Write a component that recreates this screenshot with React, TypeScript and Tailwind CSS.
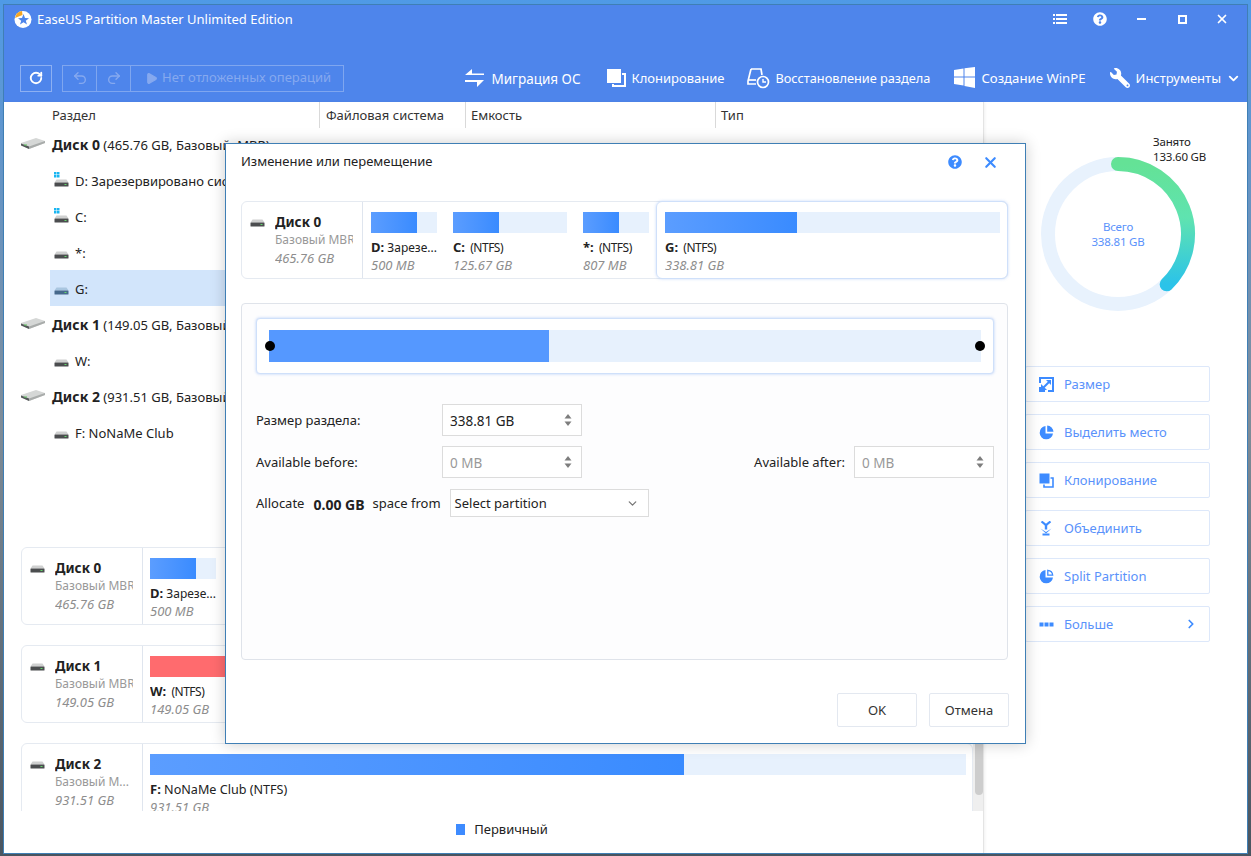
import React from "react";
import { ChevronDown, ChevronRight, RotateCw, Undo2, Redo2, Play, X } from "lucide-react";
import { FaQuestionCircle, FaWrench } from "react-icons/fa";

const font = { fontFamily: '"Noto Sans", "Open Sans", sans-serif' };

function BigDisk() {
  return (
    <svg width="24" height="14" viewBox="0 0 24 14" className="shrink-0">
      <path d="M0 6 L15 1 L24 4 L24 6 L8 12 L0 8 Z" fill="#d5d7d6" />
      <path d="M0 6.5 L8 9.5 L8 12 L0 8.5 Z" fill="#55585a" />
      <path d="M8 9.5 L24 4 L24 6 L8 12 Z" fill="#a9acab" />
      <rect x="3" y="7.5" width="3" height="1" fill="#5ec35e" />
    </svg>
  );
}

function SmallDisk({ tone = "gray", win = false }: { tone?: "gray" | "blue"; win?: boolean }) {
  const top = tone === "blue" ? "#a9c6e0" : "#cfd0d0";
  const bottom = tone === "blue" ? "#46698c" : "#4b4d4f";
  return (
    <svg width="16" height="16" viewBox="0 0 16 16" className="shrink-0">
      {win && <g fill="#19b5f1"><rect x="0" y="0" width="2.5" height="2.5" /><rect x="3" y="0" width="2.5" height="2.5" /><rect x="0" y="3" width="2.5" height="2.5" /><rect x="3" y="3" width="2.5" height="2.5" /></g>}
      <path d="M2.5 7.5 H12.5 L14.5 10.5 H0.5 Z" fill={top} />
      <rect x="0.5" y="10.5" width="14" height="4" rx="0.5" fill={bottom} />
      <rect x="10.5" y="12" width="2" height="1" fill="#63d66b" />
    </svg>
  );
}

function TreeRow({ text, win, selected }: { text: string; win?: boolean; selected?: boolean }) {
  return (
    <div className={`h-9 shrink-0 ml-[47px] pl-[4px] flex items-center gap-[5px] whitespace-nowrap overflow-hidden ${selected ? "bg-[#d2e5fb]" : ""}`}>
      <SmallDisk win={win} tone={selected ? "blue" : "gray"} />
      <span className="mt-[3px]">{text}</span>
    </div>
  );
}

function DiskRow({ name, info }: { name: string; info: string }) {
  return (
    <div className="h-9 shrink-0 pl-[18px] flex items-center gap-[7px] whitespace-nowrap overflow-hidden">
      <BigDisk />
      <span className="mt-[2px]"><b className="font-bold text-[14px]">{name}</b> {info}</span>
    </div>
  );
}

function Bar({ used, red }: { used: number; red?: boolean }) {
  return (
    <div className="h-[21px] bg-[#e7f1fd]">
      <div
        className={`h-full ${red ? "bg-[#ff6b6e]" : "bg-gradient-to-r from-[#5b9dff] to-[#398bff]"}`}
        style={{ width: `${used}%` }}
      />
    </div>
  );
}

function Part({ letter, label, size, used, width, red, labelClass }: { letter: string; label: string; size: string; used: number; width?: string; red?: boolean; labelClass?: string }) {
  return (
    <div className={`${width ?? ""} shrink-0 whitespace-pre overflow-hidden`}>
      <Bar used={used} red={red} />
      <div className="text-[12px] leading-[16px] mt-[6px] text-[#222]">
        <b className="font-bold text-[13px]">{letter}</b><span className={labelClass}>{label}</span>
      </div>
      <div className="text-[13px] leading-[16px] mt-[1px] italic text-[#8e8e8e]">{size}</div>
    </div>
  );
}

function DiskHead({ name, kind, size }: { name: string; kind: string; size: string }) {
  return (
    <div className="w-[121px] shrink-0 h-full border-r border-[#dfe5ee] flex pl-[8px] pt-[12px] gap-[9px]">
      <div className="-mt-[2px]"><SmallDisk /></div>
      <div className="whitespace-nowrap overflow-hidden w-[78px]">
        <div className="text-[13.5px] leading-[17px] font-bold text-[#222]">{name}</div>
        <div className="text-[12px] leading-[16px] mt-[1px] text-[#999]">{kind}</div>
        <div className="text-[13px] leading-[16px] mt-[2px] italic text-[#8e8e8e]">{size}</div>
      </div>
    </div>
  );
}

function Spinner() {
  return (
    <svg width="8" height="12" viewBox="0 0 8 12">
      <path d="M4 0 L7.5 4.5 H0.5 Z" fill="#7d7d7d" />
      <path d="M4 12 L0.5 7.5 H7.5 Z" fill="#7d7d7d" />
    </svg>
  );
}

function NumberBox({ value, disabled }: { value: string; disabled?: boolean }) {
  return (
    <div className={`w-[140px] h-[32px] border border-[#dcdcdc] bg-white flex items-center justify-between pl-[7px] pr-[9px] ${disabled ? "text-[#999]" : "text-[#222]"}`}>
      <span className="mt-[2px] text-[13.5px]">{value}</span>
      <Spinner />
    </div>
  );
}

function ActionIcon({ kind }: { kind: string }) {
  const c = "#3d8bff";
  if (kind === "resize")
    return (
      <svg width="15" height="15" viewBox="0 0 15 15">
        <path d="M1 6 V1 H14 V9 M14 9 V14 H9 M6 14 H1 V10" fill="none" stroke={c} strokeWidth="2" />
        <path d="M3.5 11.5 L11 4" stroke={c} strokeWidth="2" />
        <path d="M7 3 H12 V8 Z" fill={c} />
        <path d="M2 7 V13 H8 Z" fill={c} />
      </svg>
    );
  if (kind === "pie")
    return (
      <svg width="15" height="15" viewBox="0 0 15 15">
        <path d="M6.5 1 A6.7 6.7 0 1 0 14 8.5 H6.5 Z" fill={c} />
        <path d="M8.2 0.5 A6.7 6.7 0 0 1 14.5 6.8 H8.2 Z" fill={c} />
      </svg>
    );
  if (kind === "clone")
    return (
      <svg width="15" height="15" viewBox="0 0 15 15">
        <rect x="0.5" y="0.5" width="10" height="10" fill={c} />
        <path d="M11.5 5 H14 V14 H5 V11.5" fill="none" stroke={c} strokeWidth="1.6" />
      </svg>
    );
  if (kind === "merge")
    return (
      <svg width="12" height="15" viewBox="0 0 12 15" fill={c}>
        <path d="M1.5 0.5 L6 4 L10.5 0.5" fill="none" stroke={c} strokeWidth="2.2" />
        <rect x="4.8" y="3.5" width="2.4" height="5" />
        <path d="M0.5 7.5 L6 11 L11.5 7.5 L6 12.5 Z" />
        <rect x="2.5" y="12.5" width="7" height="2" />
      </svg>
    );
  if (kind === "split")
    return (
      <svg width="15" height="15" viewBox="0 0 15 15">
        <path d="M6.5 1 A6.7 6.7 0 1 0 14 8.5 H6.5 Z" fill={c} />
        <path d="M8.8 1.3 A5.4 5.4 0 0 1 13.7 6.2 H8.8 Z" fill="none" stroke={c} strokeWidth="1.3" />
      </svg>
    );
  return (
    <svg width="15" height="15" viewBox="0 0 15 15" fill={c}>
      <rect x="0.5" y="5.5" width="4" height="4" />
      <rect x="5.5" y="5.5" width="4" height="4" />
      <rect x="10.5" y="5.5" width="4" height="4" />
    </svg>
  );
}

function ActionButton({ icon, label, more }: { icon: string; label: string; more?: boolean }) {
  return (
    <div className="h-[36px] w-[185px] border border-[#dde8fa] rounded-[2px] flex items-center pl-[12px] pr-[11px] gap-[10px] text-[#5a92fb]">
      <div className="w-[16px] flex justify-center"><ActionIcon kind={icon} /></div>
      <span className="flex-1 mt-[2px]">{label}</span>
      {more && <ChevronRight size={14} strokeWidth={3} className="text-[#3d8bff]" />}
    </div>
  );
}

function Donut() {
  const r = 70;
  const cx = 78;
  const a = (136 * Math.PI) / 180;
  const ex = cx + r * Math.sin(a);
  const ey = cx - r * Math.cos(a);
  return (
    <svg width="156" height="156" viewBox="0 0 156 156" className="absolute inset-0">
      <defs>
        <linearGradient id="arc" x1="0" y1="0" x2="0" y2="1">
          <stop offset="0" stopColor="#64e296" />
          <stop offset="0.45" stopColor="#5fe3b0" />
          <stop offset="1" stopColor="#2bc3e9" />
        </linearGradient>
      </defs>
      <circle cx={cx} cy={cx} r={r} fill="none" stroke="#e8f2fd" strokeWidth="14" />
      <path d={`M${cx} ${cx - r} A${r} ${r} 0 0 1 ${ex} ${ey}`} fill="none" stroke="url(#arc)" strokeWidth="14" strokeLinecap="round" />
    </svg>
  );
}

export default function App() {
  return (
    <div style={font} className="relative w-[1251px] h-[856px] overflow-hidden text-[13px] text-[#222] bg-gradient-to-b from-[#4f9ae6] via-[#7e8c98] to-[#4a5560]">
      {/* app window */}
      <div className="relative mt-[4px] ml-[3px] w-[1245px] h-[850px] bg-white flex flex-col outline outline-1 -outline-offset-1 outline-[#3f7fb5]">
        {/* title + toolbar */}
        <div className="h-[98px] shrink-0 bg-[#4e85eb] text-white flex flex-col">
          <div className="h-[30px] flex items-center pl-[10px] pr-[6px]">
            <svg width="20" height="20" viewBox="0 0 20 20" className="shrink-0">
              <circle cx="10" cy="10.5" r="8.5" fill="#fff" />
              <path d="M2 9 A8.5 8.5 0 0 1 9 2 L9.5 6 Z" fill="#f5a623" />
              <path d="M10.5 5 L12 9 L16 9.3 L12.8 11.7 L14 15.5 L10.5 13.2 L7 15.5 L8.2 11.7 L5 9.3 L9 9 Z" fill="#4e85eb" />
            </svg>
            <span className="ml-[4px] text-[13px] mt-[2px]">EaseUS Partition Master Unlimited Edition</span>
            <div className="ml-auto flex items-center">
              <div className="w-[40px] flex justify-center">
                <svg width="14" height="12" viewBox="0 0 14 12" fill="#fff">
                  <rect x="0" y="1" width="2" height="2" /><rect x="3" y="1" width="11" height="2" />
                  <rect x="0" y="5" width="2" height="2" /><rect x="3" y="5" width="11" height="2" />
                  <rect x="0" y="9" width="2" height="2" /><rect x="3" y="9" width="11" height="2" />
                </svg>
              </div>
              <div className="w-[40px] flex justify-center"><FaQuestionCircle size={14} /></div>
              <div className="w-[42px] flex justify-center"><div className="w-[9px] h-[2px] bg-white" /></div>
              <div className="w-[40px] flex justify-center"><div className="w-[9px] h-[9px] border-2 border-white" /></div>
              <div className="w-[40px] flex justify-center"><X size={14} strokeWidth={3} /></div>
            </div>
          </div>
          <div className="mt-[31px] h-[26px] flex items-center pl-[17px] pr-[7px]">
            <div className="w-[32px] h-[27px] border border-[#8db0f2] flex items-center justify-center">
              <RotateCw size={14} strokeWidth={3.2} />
            </div>
            <div className="ml-[10px] w-[282px] h-[27px] border border-[#7fa6ef] flex items-center text-[#86a9ef]">
              <div className="w-[34px] h-full border-r border-[#7fa6ef] flex items-center justify-center"><Undo2 size={16} strokeWidth={2} /></div>
              <div className="w-[34px] h-full border-r border-[#7fa6ef] flex items-center justify-center"><Redo2 size={16} strokeWidth={2} /></div>
              <Play size={13} fill="currentColor" className="ml-[14px]" />
              <span className="ml-[4px] whitespace-nowrap">Нет отложенных операций</span>
            </div>
            <div className="ml-auto flex items-center whitespace-nowrap">
              <div className="flex items-center gap-[6px]">
                <svg width="21" height="20" viewBox="0 0 21 20" fill="#fff">
                  <path d="M1 7 L8 1 V5.5 H20 V7 Z" />
                  <path d="M20 12 L13 19 V14 H1 V12 Z" />
                </svg>
                <span className="text-[13.5px] mt-[2px]">Миграция ОС</span>
              </div>
              <div className="ml-[26px] flex items-center gap-[6px]">
                <svg width="19" height="18" viewBox="0 0 19 18" fill="none" stroke="#fff" strokeWidth="2">
                  <rect x="1" y="1" width="12" height="12" fill="#fff" />
                  <path d="M15 5 H18 V17 H6 V15" />
                </svg>
                <span className="mt-[2px]">Клонирование</span>
              </div>
              <div className="ml-[23px] flex items-center gap-[5px]">
                <svg width="23" height="22" viewBox="0 0 23 22" fill="none" stroke="#fff" strokeWidth="1.7">
                  <path d="M4 2 H14 L15 8 M4 2 L1 14 V17 H9" />
                  <path d="M2 13 H9" />
                  <circle cx="16" cy="15" r="5.5" />
                  <path d="M16 12 V15 H19" strokeWidth="1.4" />
                </svg>
                <span className="text-[12.75px] mt-[2px]">Восстановление раздела</span>
              </div>
              <div className="ml-[24px] flex items-center gap-[6px]">
                <svg width="21" height="21" viewBox="0 0 21 21" fill="#fff">
                  <path d="M0 3 L9.5 1.5 V9.5 H0 Z" />
                  <path d="M10.5 1.3 L21 0 V9.5 H10.5 Z" />
                  <path d="M0 10.5 H9.5 V18.5 L0 17 Z" />
                  <path d="M10.5 10.5 H21 V21 L10.5 19 Z" />
                </svg>
                <span className="text-[13.2px] mt-[2px]">Создание WinPE</span>
              </div>
              <div className="ml-[24px] flex items-center gap-[6px]">
                <FaWrench size={20} className="-scale-x-100" />
                <span className="mt-[2px]">Инструменты</span>
                <ChevronDown size={15} strokeWidth={3} className="ml-[-1px]" />
              </div>
            </div>
          </div>
        </div>

        <div className="flex-1 flex min-h-0">
          {/* left pane */}
          <div className="w-[981px] shrink-0 flex flex-col border-r border-[#e4e4e4] shadow-[1px_0_3px_rgba(0,0,0,0.06)]">
            <div className="h-[26px] -mb-[2px] flex shrink-0 text-[#333] leading-[26px]">
              <div className="w-[317px] pl-[49px] border-r border-[#d9d9d9]">Раздел</div>
              <div className="w-[146px] pl-[6px] border-r border-[#d9d9d9]">Файловая система</div>
              <div className="w-[250px] pl-[5px] border-r border-[#d9d9d9]">Емкость</div>
              <div className="pl-[5px]">Тип</div>
            </div>
            <DiskRow name="Диск 0" info="(465.76 GB, Базовый, MBR)" />
            <TreeRow text="D: Зарезервировано система" win />
            <TreeRow text="C:" win />
            <TreeRow text="*:" />
            <TreeRow text="G:" selected />
            <DiskRow name="Диск 1" info="(149.05 GB, Базовый, MBR)" />
            <TreeRow text="W:" />
            <DiskRow name="Диск 2" info="(931.51 GB, Базовый, MBR)" />
            <TreeRow text="F: NoNaMe Club" />

            <div className="relative mt-[97px] h-[264px] shrink-0 overflow-hidden pl-[18px]">
              <div className="flex flex-col gap-[20px] w-[952px]">
                <div className="h-[78px] border border-[#e5eaf1] rounded-[6px] flex">
                  <DiskHead name="Диск 0" kind="Базовый MBR" size="465.76 GB" />
                  <div className="flex pl-[7px] pt-[10px] gap-[16px]">
                    <Part letter="D:" label=" Зарезе..." size="500 MB" used={70} width="w-[66px]" />
                  </div>
                </div>
                <div className="h-[78px] border border-[#e5eaf1] rounded-[6px] flex">
                  <DiskHead name="Диск 1" kind="Базовый MBR" size="149.05 GB" />
                  <div className="flex-1 pl-[7px] pr-[6px] pt-[10px]">
                    <Part letter="W:" label="  (NTFS)" size="149.05 GB" used={100} red labelClass="tracking-[-0.5px]" />
                  </div>
                </div>
                <div className="h-[78px] border border-[#e5eaf1] rounded-[6px] flex">
                  <DiskHead name="Диск 2" kind="Базовый M..." size="931.51 GB" />
                  <div className="flex-1 pl-[7px] pr-[6px] pt-[10px]">
                    <Part letter="F:" label=" NoNaMe Club (NTFS)" size="931.51 GB" used={65.4} labelClass="text-[12.6px]" />
                  </div>
                </div>
              </div>
              {/* scrollbar */}
              <div className="absolute right-0 top-0 bottom-0 w-[10px] bg-[#efefef]">
                <div className="absolute left-[2px] right-0 bottom-[16px] h-[60px] bg-[#cdcdcd] rounded-b-[4px]" />
              </div>
            </div>

            <div className="flex-1 flex items-center justify-center gap-[9px] pb-[6px] pl-[18px]">
              <div className="w-[9px] h-[11px] bg-[#3d8bff]" />
              <span>Первичный</span>
            </div>
          </div>

          {/* right pane */}
          <div className="flex-1 relative">
            <div className="relative w-[156px] h-[156px] ml-[56px] mt-[54px]">
              <Donut />
              <div className="absolute inset-0 flex flex-col items-center justify-center text-[11.5px] tracking-[-0.2px] leading-[15px] text-[#5a92fb]">
                <span>Всего</span>
                <span>338.81 GB</span>
              </div>
              <div className="absolute left-[113px] top-[-22px] text-[11.5px] tracking-[-0.2px] leading-[15px] whitespace-nowrap">
                <div>Занято</div>
                <div>133.60 GB</div>
              </div>
            </div>
            <div className="ml-[41px] mt-[54px] flex flex-col gap-[12px]">
              <ActionButton icon="resize" label="Размер" />
              <ActionButton icon="pie" label="Выделить место" />
              <ActionButton icon="clone" label="Клонирование" />
              <ActionButton icon="merge" label="Объединить" />
              <ActionButton icon="split" label="Split Partition" />
              <ActionButton icon="more" label="Больше" more />
            </div>
          </div>
        </div>
      </div>

      {/* modal */}
      <div className="absolute left-[225px] top-[143px] w-[801px] h-[601px] bg-white border border-[#3f7fb5] shadow-[0_0_14px_rgba(0,0,0,0.2)] flex flex-col px-[15px]">
        <div className="h-[34px] mt-[1px] flex items-center shrink-0">
          <span>Изменение или перемещение</span>
          <FaQuestionCircle size={14} className="ml-auto text-[#3d8bff]" />
          <X size={17} strokeWidth={3} className="ml-[20px] mr-[11px] text-[#3d8bff]" />
        </div>

        <div className="mt-[22px] w-[767px] h-[78px] shrink-0 border border-[#e5eaf1] rounded-[6px] flex">
          <DiskHead name="Диск 0" kind="Базовый MBR" size="465.76 GB" />
          <div className="flex-1 flex pl-[8px] min-w-0">
            <div className="flex pt-[10px] gap-[16px]">
              <Part letter="D:" label=" Зарезе..." size="500 MB" used={70} width="w-[66px]" />
              <Part letter="C:" label="  (NTFS)" size="125.67 GB" used={40} width="w-[114px]" labelClass="tracking-[-0.5px]" />
              <Part letter="*:" label="  (NTFS)" size="807 MB" used={55} width="w-[66px]" labelClass="tracking-[-0.5px]" />
            </div>
            <div className="ml-[7px] flex-1 -my-px -mr-px border border-[#cfe0fa] rounded-[6px] shadow-[0_0_3px_rgba(100,150,240,0.35)] pl-[8px] pr-[7px] pt-[10px]">
              <Part letter="G:" label="  (NTFS)" size="338.81 GB" used={39.4} labelClass="tracking-[-0.5px]" />
            </div>
          </div>
        </div>

        <div className="mt-[24px] w-[767px] h-[357px] shrink-0 border border-[#dfe3ea] rounded-[4px] bg-[#fdfdfe] pl-[14px] pr-[13px] pt-[14px]">
          <div className="relative h-[56px] border border-[#cfe0fa] rounded-[4px] bg-white shadow-[0_0_3px_rgba(100,150,240,0.45)] px-[12px] py-[11px]">
            <div className="h-[32px] bg-[#e7f1fd]">
              <div className="h-full w-[280px] bg-[#5598ff]" />
            </div>
            <div className="absolute left-[8px] top-[22px] w-[10px] h-[10px] rounded-full bg-black" />
            <div className="absolute right-[8px] top-[22px] w-[10px] h-[10px] rounded-full bg-black" />
          </div>

          <div className="mt-[30px] flex items-center h-[32px]">
            <span className="w-[186px] mt-[2px]">Размер раздела:</span>
            <NumberBox value="338.81 GB" />
          </div>
          <div className="mt-[10px] flex items-center h-[32px]">
            <span className="w-[186px] mt-[2px]">Available before:</span>
            <NumberBox value="0 MB" disabled />
            <span className="ml-auto mr-[9px] mt-[2px]">Available after:</span>
            <NumberBox value="0 MB" disabled />
          </div>
          <div className="mt-[11px] flex items-center h-[28px]">
            <span className="mt-[2px]">Allocate</span>
            <b className="font-bold text-[14px] ml-[9px] mt-[2px]">0.00 GB</b>
            <span className="ml-[8px] mt-[2px]">space from</span>
            <div className="ml-[9px] w-[199px] h-[28px] border border-[#dcdcdc] bg-white flex items-center justify-between pl-[4px] pr-[9px]">
              <span className="mt-[2px]">Select partition</span>
              <ChevronDown size={13} strokeWidth={2.4} className="text-[#777]" />
            </div>
          </div>
        </div>

        <div className="mt-[33px] flex justify-end gap-[12px] w-[768px]">
          <div className="w-[80px] h-[34px] border border-[#e3e8f0] rounded-[2px] flex items-center justify-center text-[#333]"><span className="mt-[2px]">OK</span></div>
          <div className="w-[80px] h-[34px] border border-[#e3e8f0] rounded-[2px] flex items-center justify-center text-[#333]"><span className="mt-[2px]">Отмена</span></div>
        </div>
      </div>
    </div>
  );
}
